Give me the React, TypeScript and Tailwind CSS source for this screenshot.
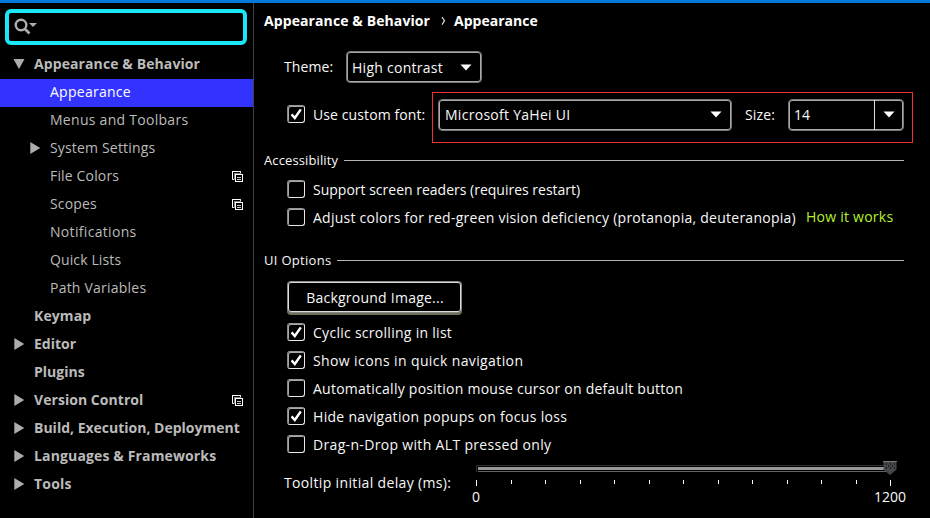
import type { ReactNode } from "react";

type Row = {
  label: string;
  tracking: string;
  level: 0 | 1;
  arrow?: "open" | "closed";
  selected?: boolean;
  project?: boolean;
};

const tree: Row[] = [
  { label: "Appearance & Behavior", tracking: "tracking-[0.1px]", level: 0, arrow: "open" },
  { label: "Appearance", tracking: "tracking-[0.26px]", level: 1, selected: true },
  { label: "Menus and Toolbars", tracking: "tracking-[0.28px]", level: 1 },
  { label: "System Settings", tracking: "tracking-[0.17px]", level: 1, arrow: "closed" },
  { label: "File Colors", tracking: "tracking-[0.16px]", level: 1, project: true },
  { label: "Scopes", tracking: "tracking-[0.17px]", level: 1, project: true },
  { label: "Notifications", tracking: "tracking-[0.32px]", level: 1 },
  { label: "Quick Lists", tracking: "tracking-[0.12px]", level: 1 },
  { label: "Path Variables", tracking: "tracking-[0.22px]", level: 1 },
  { label: "Keymap", tracking: "tracking-[0.1px]", level: 0 },
  { label: "Editor", tracking: "tracking-[0px]", level: 0, arrow: "closed" },
  { label: "Plugins", tracking: "tracking-[0px]", level: 0 },
  { label: "Version Control", tracking: "tracking-[0.05px]", level: 0, arrow: "closed", project: true },
  { label: "Build, Execution, Deployment", tracking: "tracking-[0px]", level: 0, arrow: "closed" },
  { label: "Languages & Frameworks", tracking: "tracking-[0.14px]", level: 0, arrow: "closed" },
  { label: "Tools", tracking: "tracking-[0.2px]", level: 0, arrow: "closed" },
];

function TreeArrow({ open }: { open: boolean }) {
  return open ? (
    <svg width="12" height="12" className="shrink-0" fill="#adadad">
      <path d="M-0.5 1h11L5 11z" />
    </svg>
  ) : (
    <svg width="12" height="12" className="shrink-0" fill="#adadad">
      <path d="M0.3 0v12l10-6z" />
    </svg>
  );
}

function ProjectIcon() {
  return (
    <svg width="11" height="11" className="shrink-0" fill="none" shapeRendering="crispEdges">
      <path d="M0.5 9V0.5H9" stroke="#fff" />
      <path d="M0 8.5h3M8.5 0v3" stroke="#ddd" />
      <path d="M2.5 9V2.5H9" stroke="#888" />
      <rect x="3.5" y="3.5" width="7" height="7" stroke="#fff" />
      <path d="M5 6.5h4M5 8.5h4" stroke="#ccc" />
    </svg>
  );
}

function Check({ checked }: { checked?: boolean }) {
  return (
    <span className="flex h-[18px] w-[18px] shrink-0 items-center justify-center rounded-[3px] border border-t-[#999] border-r-[#e8e8e8] border-b-[#e8e8e8] border-l-[#888] shadow-[inset_1px_1px_0_#a8a8a8]">
      {checked && (
        <svg width="16" height="16" fill="none" stroke="#fff" strokeWidth="2.4">
          <path d="M3.6 8.4L6.8 12L12.8 3.4" />
        </svg>
      )}
    </span>
  );
}

function CheckRow({ checked, tracking, children }: { checked?: boolean; tracking: string; children: ReactNode }) {
  return (
    <div className="flex h-7 items-center gap-[8px] pl-[33px]">
      <Check checked={checked} />
      <span className={tracking}>{children}</span>
    </div>
  );
}

function DropArrow() {
  return (
    <svg width="12" height="7" className="shrink-0" fill="#fff">
      <path d="M0.5 0.5h11L6 6.5z" />
    </svg>
  );
}

function Section({ title, tracking }: { title: string; tracking: string }) {
  return (
    <div className="flex h-6 items-center pr-[26px]">
      <span className={`mt-[2px] mr-[6px] text-[13px] ${tracking}`}>{title}</span>
      <div className="h-px flex-1 bg-[#b4b4b4]" />
    </div>
  );
}

function Slider() {
  return (
    <div className="w-[442px]">
      <div className="flex h-[15px] items-start pl-[12px]">
        <div className="mt-[4px] h-[7px] w-[410px] border-t border-l border-[#333] pt-px pl-px">
          <div className="h-[3px] bg-[#999]" />
          <div className="mt-px h-px bg-[#60666b]" />
        </div>
        <svg width="14" height="15" className="-ml-[3px]">
          <path d="M0.5 0.5h13v8L7 14L0.5 8.5z" fill="#46494b" />
          <path d="M0 0.5h14" stroke="#777" />
          <path d="M3 3h1M7 3h1M11 3h1M5 5h1M9 5h1M3 7h1M7 7h1M11 7h1" stroke="#111" strokeWidth="1.5" />
        </svg>
      </div>
      <div className="mt-[4px] ml-[12px] flex h-[6px] w-[415px] justify-between">
        {Array.from({ length: 13 }, (_, i) => (
          <div key={i} className={`w-px bg-white ${i % 12 === 0 ? "h-[6px]" : "h-[4px]"}`} />
        ))}
      </div>
      <div className="flex h-[21px] justify-between pt-px pl-[8px] text-[14px] leading-[20px]">
        <span>0</span>
        <span>1200</span>
      </div>
    </div>
  );
}

export default function App() {
  return (
    <div className="flex h-[518px] w-[930px] flex-col overflow-hidden bg-black font-['Open_Sans','Noto_Sans',sans-serif] text-[14px] whitespace-nowrap text-[#f8f8f8]">
      <div className="h-[3px] shrink-0 bg-[#0078d7]" />
      <div className="flex min-h-0 flex-1">
        <aside className="w-[254px] shrink-0 border-r border-[#414141] pt-[6px]">
          <div className="ml-[5px] flex h-[36px] w-[242px] items-start rounded-[6px] border-4 border-[#1ae6f8] pt-[5px] pl-[5px]">
            <svg width="24" height="17" fill="none">
              <circle cx="7" cy="7" r="5.3" stroke="#adadad" strokeWidth="2.4" />
              <path d="M10.5 10.5L15.5 15.5" stroke="#adadad" strokeWidth="2.6" />
              <path d="M15 5h8l-4 4z" fill="#adadad" />
            </svg>
          </div>
          <nav className="mt-[6px]">
            {tree.map((r) => (
              <div
                key={r.label}
                className={`flex h-7 items-center pr-[10px] ${r.level === 0 ? "pl-[14px] font-bold" : "pl-[30px]"} ${
                  r.selected ? "bg-[#3333ff] text-white" : "text-[#bbb]"
                }`}
              >
                <span className="-mt-[2px] flex w-[20px] shrink-0 items-center">
                  {r.arrow && <TreeArrow open={r.arrow === "open"} />}
                </span>
                <span className={`-mt-[4px] ${r.tracking}`}>{r.label}</span>
                {r.project && (
                  <span className="-mt-[2px] ml-auto">
                    <ProjectIcon />
                  </span>
                )}
              </div>
            ))}
          </nav>
        </aside>
        <main className="min-w-0 flex-1 pl-[10px]">
          <div className="flex h-[34px] items-center font-bold text-white">
            <span className="tracking-[0.1px]">Appearance &amp; Behavior</span>
            <svg width="6" height="10" className="mt-[2px] mr-[7px] ml-[11px]" fill="none" stroke="#ddd" strokeWidth="1.2">
              <path d="M1 1l2.5 3.8l-2.5 3.8" />
            </svg>
            <span>Appearance</span>
          </div>
          <div className="mt-[14px] flex h-[32px] items-center pl-[20px]">
            <span className="-mt-[2px] w-[62px] tracking-[0.1px]">Theme:</span>
            <div className="flex h-[32px] w-[136px] items-center justify-between rounded-[4px] border border-[#777] pr-[9px] pl-[5px] shadow-[inset_0_0_0_1px_#aaa]">
              <span className="tracking-[0.27px]">High contrast</span>
              <DropArrow />
            </div>
          </div>
          <div className="mt-[9px] flex h-[51px] items-center">
            <div className="-mt-[7px] flex w-[168px] items-center gap-[8px] pl-[23px]">
              <Check checked />
              <span className="tracking-[0.1px]">Use custom font:</span>
            </div>
            <div className="flex h-[51px] w-[481px] items-center border border-[#f03030] pl-[5px]">
              <div className="-mt-[6px] flex h-[32px] w-[294px] shrink-0 items-center justify-between rounded-[4px] border border-[#777] pr-[9px] pl-[6px] shadow-[inset_0_0_0_1px_#aaa]">
                <span className="tracking-[0.28px]">Microsoft YaHei UI</span>
                <DropArrow />
              </div>
              <span className="-mt-[6px] w-[56px] pl-[13px] tracking-[0.15px]">Size:</span>
              <div className="-mt-[6px] flex h-[32px] w-[116px] shrink-0 items-center rounded-[4px] border border-[#777] pr-px pl-[5px] shadow-[inset_0_0_0_1px_#aaa]">
                <span className="flex-1">14</span>
                <div className="flex h-full w-[28px] items-center justify-center border-l border-[#ddd]">
                  <DropArrow />
                </div>
              </div>
            </div>
          </div>
          <div className="mt-[5px]">
            <Section title="Accessibility" tracking="tracking-[0.12px]" />
          </div>
          <div className="-ml-[10px] mt-[3px]">
            <CheckRow tracking="tracking-[0px]">Support screen readers (requires restart)</CheckRow>
            <div className="flex">
              <CheckRow tracking="tracking-[0.255px]">
                Adjust colors for red-green vision deficiency (protanopia, deuteranopia)
              </CheckRow>
              <span className="ml-[10px] leading-7 tracking-[0.25px] text-[#b8f02c]">How it works</span>
            </div>
          </div>
          <div className="mt-[17px]">
            <Section title="UI Options" tracking="tracking-[0.3px]" />
          </div>
          <div className="mt-[9px] ml-[23px] h-[34px] w-[175px] rounded-[4px] bg-[#6f705a]">
            <div className="flex h-[32px] items-center justify-center rounded-[4px] border border-[#888] bg-black pl-px tracking-[0.24px] shadow-[inset_0_0_0_1px_#ddd]">
              Background Image...
            </div>
          </div>
          <div className="-ml-[10px] mt-[3px]">
            <CheckRow checked tracking="tracking-[0.28px]">Cyclic scrolling in list</CheckRow>
            <CheckRow checked tracking="tracking-[0.39px]">Show icons in quick navigation</CheckRow>
            <CheckRow tracking="tracking-[0.25px]">Automatically position mouse cursor on default button</CheckRow>
            <CheckRow checked tracking="tracking-[0.31px]">Hide navigation popups on focus loss</CheckRow>
            <CheckRow tracking="tracking-[0.33px]">Drag-n-Drop with ALT pressed only</CheckRow>
          </div>
          <div className="mt-[3px] flex pl-[20px]">
            <span className="w-[180px] pt-[11px] tracking-[0.35px]">Tooltip initial delay (ms):</span>
            <Slider />
          </div>
        </main>
      </div>
    </div>
  );
}
